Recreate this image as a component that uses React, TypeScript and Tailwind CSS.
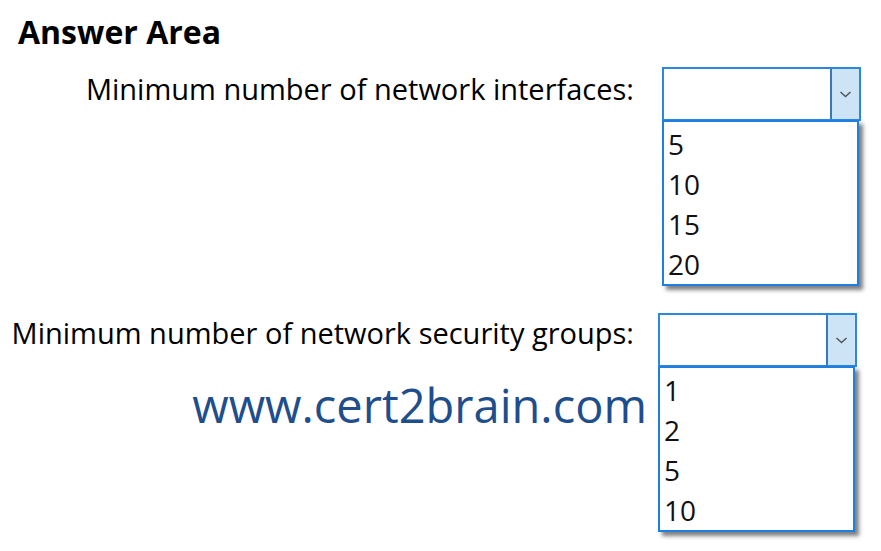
import React from 'react';

interface DropdownProps {
  options: string[];
}

// Open combo box: the closed field on top, option list below with its drop shadow
const OpenDropdown: React.FC<DropdownProps> = ({ options }) => {
  return (
    <div className="flex flex-col w-[199px]">
      <div className="flex h-[54px] border-2 border-[#2b88e0] bg-white">
        <div className="flex-1" />
        <div className="w-[29px] flex items-center justify-center bg-[#cde4f7] border-l-2 border-[#3a78b8]">
          <svg width="13" height="8" viewBox="0 0 13 8" fill="none">
            <path d="M1.5 2l5 4.5 5-4.5" stroke="#555" strokeWidth="1.5" />
          </svg>
        </div>
      </div>
      <div className="w-[197px] -mt-[1px] border-2 border-[#1e7fe0] bg-white shadow-[4px_4px_4px_rgba(0,0,0,0.5)] pt-[2px] pl-[4px]">
        {options.map((opt) => (
          <div key={opt} className="h-[40px] leading-[40px] text-[28px] text-[#111]">
            {opt}
          </div>
        ))}
      </div>
    </div>
  );
};

export default function App() {
  return (
    <div className="w-[881px] h-[551px] bg-white font-['Open_Sans',sans-serif] text-black overflow-hidden">
      <h1 className="pl-[18px] pt-[12px] text-[32px] font-bold leading-[40px]">Answer Area</h1>

      <div className="flex mt-[15px]">
        <div className="w-[634px] flex justify-end pt-[2px]">
          <span className="text-[29px] leading-[40px] whitespace-nowrap">Minimum number of network interfaces:</span>
        </div>
        <div className="ml-[28px]">
          <OpenDropdown options={['5', '10', '15', '20']} />
        </div>
      </div>

      <div className="flex mt-[27px]">
        <div className="w-[647px] flex flex-col items-end">
          <span className="pr-[13px] text-[29px] leading-[40px] whitespace-nowrap">
            Minimum number of network security groups:
          </span>
          <span className="mt-[24px] text-[47px] leading-[56px] text-[#1f4e8c] whitespace-nowrap">www.cert2brain.com</span>
        </div>
        <div className="ml-[11px]">
          <OpenDropdown options={['1', '2', '5', '10']} />
        </div>
      </div>
    </div>
  );
}
